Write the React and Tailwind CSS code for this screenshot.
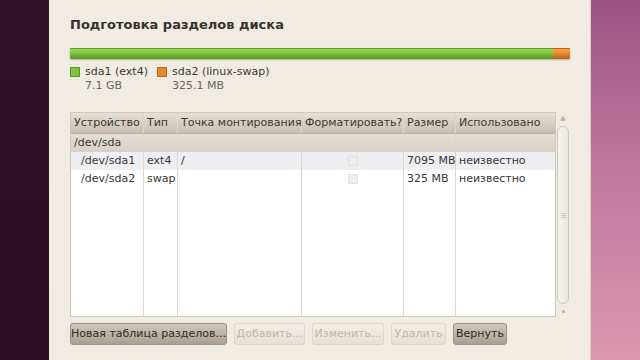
import React from "react";

const cols = [
  { label: "Устройство", w: "w-[73px]" },
  { label: "Тип", w: "w-[34px]" },
  { label: "Точка монтирования", w: "w-[124px]" },
  { label: "Форматировать?", w: "w-[102px]" },
  { label: "Размер", w: "w-[52px]" },
  { label: "Использовано", w: "flex-1" },
];

const rows = [
  { cells: ["/dev/sda", "", "", "", "", ""], bg: "bg-gradient-to-b from-[#e4dfd6] to-[#d6d0c5]", indent: false },
  { cells: ["/dev/sda1", "ext4", "/", "check", "7095 MB", "неизвестно"], bg: "bg-[#eeeef3]", indent: true },
  { cells: ["/dev/sda2", "swap", "", "box", "325 MB", "неизвестно"], bg: "bg-white", indent: true },
];

function Cell({ w, children, last }) {
  return (
    <div className={`${w} h-full flex items-center px-[3px] ${last ? "" : "border-r border-[#dcd6cc]"}`}>
      {children}
    </div>
  );
}

function Btn({ children, active, w }) {
  return (
    <div
      className={`${w} h-[22px] flex items-center justify-center rounded-[3px] border text-[11px] ${
        active
          ? "border-[#9a9182] bg-gradient-to-b from-[#cfc8bb] to-[#a9a091] text-[#2e2b27]"
          : "border-[#ddd6ca] bg-gradient-to-b from-[#f2eee7] to-[#e6e0d6] text-[#bdb6aa]"
      }`}
    >
      {children}
    </div>
  );
}

export default function App() {
  return (
    <div
      className="w-[640px] h-[360px] flex overflow-hidden"
      style={{ fontFamily: '"DejaVu Sans", "Liberation Sans", sans-serif' }}
    >
      <div className="w-[49px] h-full bg-gradient-to-b from-[#2f1128] to-[#2a0d22]" />
      <div className="w-[542px] h-full bg-[#f0ebe3] border-r border-[#d9cfc8] pl-[21px] pr-[20px] pt-[15px] flex flex-col">
        <h1 className="text-[13px] font-bold text-[#35322e] leading-[20px]">Подготовка разделов диска</h1>

        <div className="mt-[13px] w-[500px] h-[11px] flex rounded-[1px] overflow-hidden shadow-[0_1px_2px_rgba(0,0,0,0.25)]">
          <div className="flex-1 bg-gradient-to-b from-[#9ad65a] via-[#7cc43a] to-[#5a9a26] border-y border-[#5d9a2a]" />
          <div className="w-[17px] bg-gradient-to-b from-[#f3a548] via-[#e9882a] to-[#c0691a] border-y border-[#b8651a]" />
        </div>

        <div className="mt-[6px] flex gap-[9px] text-[11px] text-[#3c3934] leading-[14px]">
          <div className="flex gap-[5px]">
            <div className="w-[10px] h-[10px] mt-[2px] bg-[#7cc23c] border border-[#5c9a26]" />
            <div>
              <div>sda1 (ext4)</div>
              <div className="text-[#6a655d]">7.1 GB</div>
            </div>
          </div>
          <div className="flex gap-[5px]">
            <div className="w-[10px] h-[10px] mt-[2px] bg-[#e9882a] border border-[#b8651a]" />
            <div>
              <div>sda2 (linux-swap)</div>
              <div className="text-[#6a655d]">325.1 MB</div>
            </div>
          </div>
        </div>

        <div className="mt-[19px] flex h-[205px]">
          <div className="w-[487px] h-full border border-[#cfc8bc] bg-white flex flex-col text-[11px] text-[#3a3732]">
            <div className="h-[21px] flex bg-gradient-to-b from-[#e6e1d8] to-[#c6beb0] text-[#3a3732] border-b border-[#b9b0a2]">
              {cols.map((c, i) => (
                <Cell key={c.label} w={c.w} last={i === cols.length - 1}>
                  <span className="whitespace-nowrap">{c.label}</span>
                </Cell>
              ))}
            </div>
            {rows.map((r, ri) => (
              <div key={ri} className={`h-[18px] flex ${r.bg}`}>
                {r.cells.map((v, i) => (
                  <Cell key={i} w={cols[i].w} last={i === cols.length - 1}>
                    {v === "check" || v === "box" ? (
                      <div className="w-full flex justify-center">
                        <div className="w-[10px] h-[10px] border border-[#e4e0da] bg-[#f1efeb] rounded-[1px]" />
                      </div>
                    ) : (
                      <span className={`whitespace-nowrap ${r.indent && i === 0 ? "pl-[7px]" : ""}`}>{v}</span>
                    )}
                  </Cell>
                ))}
              </div>
            ))}
            <div className="flex-1 flex">
              {cols.map((c, i) => (
                <Cell key={i} w={c.w} last={i === cols.length - 1} />
              ))}
            </div>
          </div>
          <div className="w-[14px] h-full flex flex-col items-center pt-[2px]">
            <div className="text-[7px] leading-[8px] text-[#b8b0a4]">▲</div>
            <div className="mt-[4px] w-[12px] flex-1 rounded-[6px] border border-[#cfc8bc] bg-gradient-to-r from-[#f6f3ee] to-[#ebe6dd] flex items-center justify-center">
              <div className="flex flex-col gap-[1px]">
                <div className="w-[5px] h-px bg-[#cbc4b8]" />
                <div className="w-[5px] h-px bg-[#cbc4b8]" />
                <div className="w-[5px] h-px bg-[#cbc4b8]" />
              </div>
            </div>
            <div className="mt-[6px] mb-[4px] w-[3px] h-[3px] rounded-full bg-[#b8b0a4]" />
          </div>
        </div>

        <div className="mt-[6px] flex gap-[7px]">
          <Btn active w="w-[157px]">Новая таблица разделов...</Btn>
          <Btn w="w-[71px]">Добавить...</Btn>
          <Btn w="w-[72px]">Изменить...</Btn>
          <Btn w="w-[55px]">Удалить</Btn>
          <Btn active w="w-[54px]">Вернуть</Btn>
        </div>
      </div>
      <div className="flex-1 h-full bg-gradient-to-b from-[#9c5484] via-[#c27aa0] to-[#dc98ae]" />
    </div>
  );
}
